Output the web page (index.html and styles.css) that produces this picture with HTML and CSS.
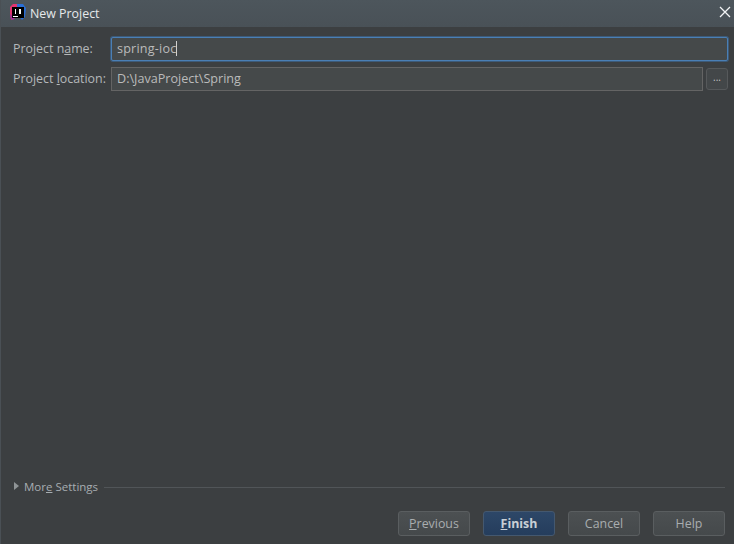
FILE: index.html
```html
<!DOCTYPE html>
<html lang="en">
<head>
    <meta charset="UTF-8" />
    <meta name="viewport" content="width=device-width, initial-scale=1.0" />
    <title>New Project</title>
    <link rel="stylesheet" href="styles.css">
</head>
<body>
    <div class="dialog">
        <header class="titlebar">
            <svg class="app-icon" width="16" height="16" viewBox="0 0 16 16">
                <path d="M0 3 L3 0 L8 0 L8 8 L3 14 L1 16 L0 10 Z" fill="#e0356f"/>
                <path d="M7 0 L13 0 L16 4 L15 13 L12 16 L7 10 Z" fill="#2a6fd6"/>
                <path d="M0 10 L5 14 L3 16 L1 15 Z" fill="#a32e9a"/>
                <rect x="2" y="3" width="12" height="11" fill="#000"/>
                <rect x="3" y="12" width="5" height="1" fill="#fff"/>
                <rect x="5" y="5" width="1" height="5" fill="#fff"/>
                <rect x="9" y="5" width="2" height="5" fill="#fff"/>
            </svg>
            <span class="title">New Project</span>
            <svg class="close" width="12" height="12" viewBox="0 0 12 12">
                <path d="M1 1 L11 11 M11 1 L1 11" stroke="#f2f4f5" stroke-width="1.3" fill="none"/>
            </svg>
        </header>

        <main class="content">
            <div class="form-row">
                <label class="form-label">Project n<u>a</u>me:</label>
                <div class="field focused">spring-ioc<span class="caret"></span></div>
            </div>
            <div class="form-row">
                <label class="form-label">Project <u>l</u>ocation:</label>
                <div class="field">D:\JavaProject\Spring</div>
                <div class="browse">...</div>
            </div>
        </main>

        <div class="more">
            <span class="arrow"></span>
            <span class="more-label">Mor<u>e</u> Settings</span>
            <span class="more-line"></span>
        </div>

        <footer class="buttons">
            <button class="btn"><u>P</u>revious</button>
            <button class="btn primary"><u>F</u>inish</button>
            <button class="btn">Cancel</button>
            <button class="btn">Help</button>
        </footer>
    </div>
</body>
</html>
```

FILE: styles.css
```css
html, body {
    margin: 0;
    height: 100%;
}
body {
    background: #3c3f41;
    font-family: "Open Sans", "Noto Sans", sans-serif;
    font-size: 12.4px;
    color: #b4b8ba;
}
.dialog {
    width: 734px;
    height: 544px;
    display: flex;
    flex-direction: column;
    box-sizing: border-box;
    border-left: 1px solid #4a5055;
}
.titlebar {
    height: 27px;
    flex: none;
    box-sizing: border-box;
    display: flex;
    align-items: center;
    padding: 0 3px 1px 9px;
    background: linear-gradient(#4d565c, #495157);
}
.app-icon {
    margin-bottom: 2px;
}
.title {
    margin-left: 4px;
    color: #e6e9eb;
    font-size: 12.4px;
    flex: 1;
}
.close {
    margin-bottom: 2px;
}
.content {
    flex: 1;
    padding: 10px 6px 0 12px;
}
.form-row {
    display: flex;
    align-items: center;
    height: 24px;
    margin-bottom: 6px;
}
.form-label {
    width: 98px;
    flex: none;
    margin-bottom: 2px;
}
.field {
    flex: 1;
    height: 24px;
    box-sizing: border-box;
    line-height: 21px;
    padding-left: 5px;
    background: #45494a;
    border: 1px solid #646464;
    color: #bbbbbb;
    font-size: 12.6px;
}
.field.focused {
    border-color: #4a7fb5;
    border-radius: 2px;
    box-shadow: 0 0 0 1px #3d5a78;
    letter-spacing: 0.2px;
}
.caret {
    display: inline-block;
    width: 1px;
    height: 15px;
    background: #d0d0d0;
    vertical-align: -3px;
}
.browse {
    width: 22px;
    height: 22px;
    flex: none;
    margin-left: 3px;
    box-sizing: border-box;
    border: 1px solid #56595b;
    border-radius: 3px;
    background: #434749;
    text-align: center;
    line-height: 17px;
    font-size: 10px;
    color: #c4c4c4;
}
.more {
    display: flex;
    align-items: center;
    height: 16px;
    padding: 0 9px 0 13px;
}
.arrow {
    width: 0;
    height: 0;
    border-left: 5px solid #8f9496;
    border-top: 4px solid transparent;
    border-bottom: 4px solid transparent;
}
.more-label {
    margin-left: 5px;
    font-size: 11.5px;
    color: #a7adb1;
}
.more-line {
    flex: 1;
    height: 1px;
    margin-left: 6px;
    margin-top: 2px;
    background: #515558;
}
.buttons {
    display: flex;
    justify-content: flex-end;
    gap: 13px;
    padding: 17px 9px 8px 0;
}
.btn {
    width: 72px;
    height: 25px;
    padding: 0;
    font: inherit;
    color: #a9adaf;
    background: linear-gradient(#4c5052, #45494b);
    border: 1px solid #5a5e60;
    border-radius: 3px;
}
.btn.primary {
    color: #c9d0d6;
    font-weight: 700;
    background: linear-gradient(#2d4768, #253d5c);
    border-color: #44586f;
}
```
